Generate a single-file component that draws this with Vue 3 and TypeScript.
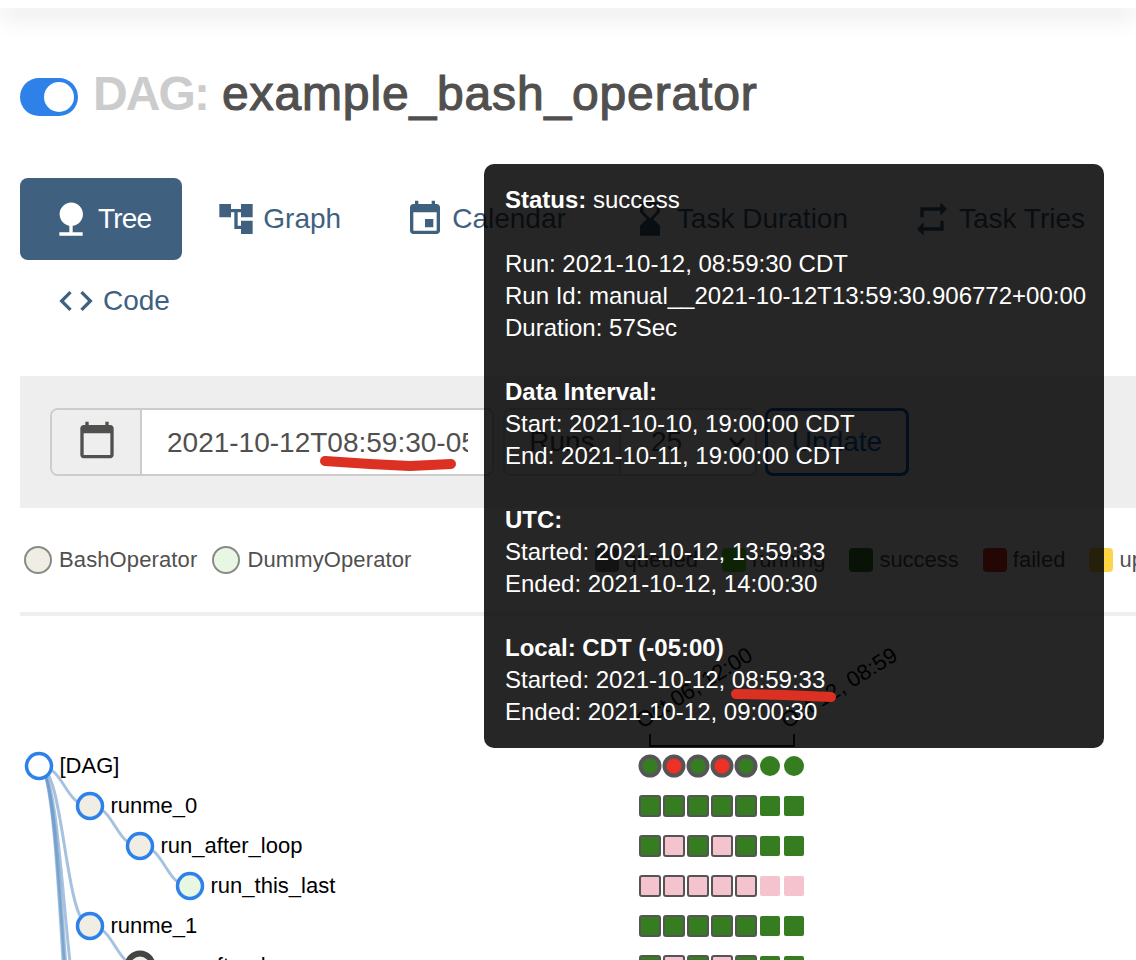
<script setup lang="ts">
interface Tab { label: string; icon: string; active?: boolean }
interface Row { label: string; x: number; y: number; fill: string; ring: string; ringWidth: number; cells: string[] }

const tabs: Tab[] = [
  { label: 'Tree', active: true, icon: 'M13 16.12c3.47-.41 6.17-3.36 6.17-6.95 0-3.87-3.13-7-7-7s-7 3.13-7 7c0 3.47 2.52 6.34 5.83 6.89V20H5v2h14v-2h-6v-3.88z' },
  { label: 'Graph', icon: 'M22 11V3h-7v3H9V3H2v8h7V8h2v10h4v3h7v-8h-7v3h-2V8h2v3z' },
  { label: 'Calendar', icon: 'M17 12h-5v5h5v-5zM16 1v2H8V1H6v2H5c-1.11 0-1.99.9-1.99 2L3 19c0 1.1.89 2 2 2h14c1.1 0 2-.9 2-2V5c0-1.1-.9-2-2-2h-1V1h-2zm3 18H5V8h14v11z' },
  { label: 'Task Duration', icon: 'M18 22l-.01-6L14 12l3.99-4.01L18 2H6v6l4 4-4 3.99V22h12zM8 7.5V4h8v3.5l-4 4-4-4z' },
  { label: 'Task Tries', icon: 'M7 7h10v3l4-4-4-4v3H5v6h2V7zm10 10H7v-3l-4 4 4 4v-3h12v-6h-2v4z' },
  { label: 'Code', icon: 'M9.4 16.6L4.8 12l4.6-4.6L8 6l-6 6 6 6 1.4-1.4zm5.2 0l4.6-4.6-4.6-4.6L16 6l6 6-6 6-1.4-1.4z' }
]

const operators = [
  { label: 'BashOperator', color: '#f0ede4' },
  { label: 'DummyOperator', color: '#e8f7e4' }
]

const states = [
  { label: 'queued', color: '#808080' },
  { label: 'running', color: '#5fe32c' },
  { label: 'success', color: '#367d22' },
  { label: 'failed', color: '#ee3124' },
  { label: 'up_for_retry', color: '#fdd545' }
]

const G = '#367d22'
const P = '#f5c3cd'
const R = '#ee3124'
const BLUE = '#2f81ea'
const BASH = '#f0ede4'

const rows: Row[] = [
  { label: '[DAG]', x: 39, y: 766, fill: '#fff', ring: BLUE, ringWidth: 3.5, cells: [G, R, G, R, G, G, G] },
  { label: 'runme_0', x: 90, y: 806, fill: BASH, ring: BLUE, ringWidth: 3.5, cells: [G, G, G, G, G, G, G] },
  { label: 'run_after_loop', x: 140, y: 846, fill: BASH, ring: BLUE, ringWidth: 3.5, cells: [G, P, G, P, G, G, G] },
  { label: 'run_this_last', x: 190, y: 886, fill: '#e8f7e4', ring: BLUE, ringWidth: 3.5, cells: [P, P, P, P, P, P, P] },
  { label: 'runme_1', x: 90, y: 926, fill: BASH, ring: BLUE, ringWidth: 3.5, cells: [G, G, G, G, G, G, G] },
  { label: 'run_after_loop', x: 140, y: 966, fill: BASH, ring: '#444', ringWidth: 6, cells: [G, P, G, P, G, G, G] }
]

const diagonal = (x0: number, y0: number, x1: number, y1: number) => {
  const mid = (x0 + x1) / 2
  return `M${x0} ${y0}C${mid} ${y0} ${mid} ${y1} ${x1} ${y1}`
}

const links = [
  diagonal(39, 766, 90, 806),
  diagonal(90, 806, 140, 846),
  diagonal(140, 846, 190, 886),
  diagonal(39, 766, 90, 926),
  diagonal(90, 926, 140, 966),
  diagonal(39, 766, 90, 1046),
  diagonal(39, 766, 90, 1126),
  diagonal(39, 766, 90, 1166),
  diagonal(39, 766, 90, 1206)
]

const cellX = (i: number) => 640 + i * 24

const tooltip = [
  [{ b: 'Status:', t: ' success' }],
  [{ t: 'Run: 2021-10-12, 08:59:30 CDT' }, { t: 'Run Id: manual__2021-10-12T13:59:30.906772+00:00' }, { t: 'Duration: 57Sec' }],
  [{ b: 'Data Interval:' }, { t: 'Start: 2021-10-10, 19:00:00 CDT' }, { t: 'End: 2021-10-11, 19:00:00 CDT' }],
  [{ b: 'UTC:' }, { t: 'Started: 2021-10-12, 13:59:33' }, { t: 'Ended: 2021-10-12, 14:00:30' }],
  [{ b: 'Local: CDT (-05:00)' }, { t: 'Started: 2021-10-12, 08:59:33' }, { t: 'Ended: 2021-10-12, 09:00:30' }]
]
</script>

<template>
  <div class="page">
    <div class="navbar"></div>

    <main class="content">
      <h1 class="title">
        <span class="toggle"><span class="knob"></span></span>
        <span class="dag">DAG:</span>
        <span class="name">example_bash_operator</span>
      </h1>

      <nav class="tabs">
        <a v-for="tab in tabs" :key="tab.label" :class="['tab', { active: tab.active }]">
          <svg class="tab-icon" viewBox="0 0 24 24"><path :d="tab.icon" /></svg>
          {{ tab.label }}
        </a>
      </nav>

      <section class="controls">
        <div class="group date">
          <span class="addon">
            <svg class="cal" viewBox="0 0 24 24"><path d="M20 3h-1V1h-2v2H7V1H5v2H4c-1.1 0-2 .9-2 2v16c0 1.1.9 2 2 2h16c1.1 0 2-.9 2-2V5c0-1.1-.9-2-2-2zm0 18H4V8h16v13z" /></svg>
          </span>
          <input class="field" type="text" value="2021-10-12T08:59:30-05:00" readonly />
        </div>
        <div class="group runs">
          <span class="addon">Runs</span>
          <span class="select">
            25
            <svg class="chevron" viewBox="0 0 24 24"><path d="M5 8l7 8 7-8" /></svg>
          </span>
        </div>
        <button class="update" type="button">Update</button>
      </section>

      <section class="legend">
        <div class="legend-group">
          <span v-for="op in operators" :key="op.label" class="legend-item">
            <i class="dot" :style="{ background: op.color }"></i>{{ op.label }}
          </span>
        </div>
        <div class="legend-group states">
          <span v-for="s in states" :key="s.label" class="legend-item">
            <i class="swatch" :style="{ background: s.color }"></i>{{ s.label }}
          </span>
        </div>
      </section>
    </main>

    <svg class="chart" width="1116" height="344" viewBox="20 616 1116 344">
      <text class="axis-label" transform="translate(642 729) rotate(-32)">Oct 06, 12:00</text>
      <text class="axis-label" transform="translate(787 729) rotate(-32)">Oct 12, 08:59</text>
      <path d="M650 734V746H794V734" fill="none" stroke="#222" stroke-width="2" />

      <path v-for="(d, i) in links" :key="i" :d="d" class="link" />

      <g v-for="row in rows" :key="row.y">
        <circle :cx="row.x" :cy="row.y" r="12.5" :fill="row.fill" :stroke="row.ring" :stroke-width="row.ringWidth" />
        <text class="node-label" :x="row.x + 20.5" :y="row.y + 7">{{ row.label }}</text>
        <template v-for="(color, i) in row.cells" :key="i">
          <circle v-if="row.label === '[DAG]'" :cx="cellX(i) + 10" :cy="row.y" :r="i < 5 ? 9.5 : 10" :fill="color" :stroke="i < 5 ? '#555' : 'none'" :stroke-width="i < 5 ? 4 : 0" />
          <rect v-else :x="cellX(i)" :y="row.y - 10" width="20" height="20" rx="2" :fill="color" :stroke="i < 5 ? '#555' : 'none'" :stroke-width="i < 5 ? 2 : 0" />
        </template>
      </g>
    </svg>

    <aside class="tooltip">
      <p v-for="(block, i) in tooltip" :key="i">
        <span v-for="(line, j) in block" :key="j" class="line"><b v-if="line.b">{{ line.b }}</b>{{ line.t }}</span>
      </p>
    </aside>

    <svg class="marks" width="1136" height="960" viewBox="0 0 1136 960">
      <path d="M325 461L370 464L410 466L451 464" />
      <path d="M736 694L785 695L831 697" />
    </svg>
  </div>
</template>

<style>
html,
body {
  margin: 0;
  background: #fff;
}
</style>

<style scoped>
.page {
  position: relative;
  width: 1136px;
  height: 960px;
  overflow: hidden;
  background: #fff;
  font-family: "Liberation Sans", Arial, sans-serif;
  color: #51504f;
}

.navbar {
  height: 8px;
  background: #fff;
  box-shadow: 0 6px 24px rgba(0, 0, 0, 0.18);
}

.content {
  margin-left: 20px;
}

.title {
  display: flex;
  align-items: center;
  height: 58px;
  margin: 60px 0 0;
  font-size: 48px;
  line-height: 58px;
  white-space: nowrap;
}

.toggle {
  display: flex;
  align-items: center;
  justify-content: flex-end;
  box-sizing: border-box;
  width: 58px;
  height: 38px;
  padding-right: 4px;
  margin-right: 15px;
  border-radius: 19px;
  background: #2f81ea;
}

.knob {
  width: 30px;
  height: 30px;
  border-radius: 50%;
  background: #fff;
}

.dag {
  color: #ccc;
  font-weight: bold;
  letter-spacing: -1.9px;
  margin: 0 14px 6px 0;
}

.name {
  margin-bottom: 6px;
  font-weight: normal;
  letter-spacing: 0.85px;
  -webkit-text-stroke: 1.2px #51504f;
}

.tabs {
  display: flex;
  flex-wrap: wrap;
  column-gap: 4px;
  margin-top: 52px;
}

.tab {
  display: flex;
  align-items: center;
  gap: 7px;
  height: 82px;
  padding: 0 30px;
  border-radius: 8px;
  font-size: 28px;
  color: #406080;
  white-space: nowrap;
}

.tab.active {
  padding: 0 31px;
  background: #406080;
  color: #fff;
  letter-spacing: -0.8px;
}

.tab:last-child {
  margin-left: 6px;
}

.tab-icon {
  width: 40px;
  height: 40px;
  fill: currentColor;
}

.controls {
  display: flex;
  gap: 8px;
  height: 68px;
  padding: 32px 30px;
  margin-top: 34px;
  background: #eee;
  white-space: nowrap;
}

.group {
  display: flex;
  box-sizing: border-box;
  height: 68px;
  border: 2px solid #ccc;
  border-radius: 8px;
  overflow: hidden;
  background: #fff;
  font-size: 28px;
}

.date {
  width: 444px;
}

.runs {
  width: 254px;
  margin-left: 1px;
}

.addon {
  display: flex;
  align-items: center;
  justify-content: center;
  box-sizing: border-box;
  background: #eee;
  border-right: 2px solid #ccc;
}

.date .addon {
  width: 90px;
}

.runs .addon {
  width: 116px;
}

.cal {
  width: 40px;
  height: 40px;
  margin: 0 0 4px 1px;
  fill: #51504f;
}

.field {
  flex: 1;
  min-width: 0;
  padding: 2px 24px 0 25px;
  border: 0;
  outline: 0;
  font: inherit;
  color: #51504f;
  background: #fff;
}

.select {
  display: flex;
  flex: 1;
  align-items: center;
  justify-content: space-between;
  padding: 0 6px 0 30px;
}

.chevron {
  width: 24px;
  height: 24px;
  fill: none;
  stroke: #51504f;
  stroke-width: 3;
}

.update {
  width: 144px;
  height: 68px;
  padding: 0;
  border: 3px solid #0f62b8;
  border-radius: 8px;
  background: transparent;
  font: inherit;
  font-size: 28px;
  color: #0f62b8;
}

.legend {
  display: flex;
  align-items: center;
  gap: 183px;
  box-sizing: border-box;
  height: 108px;
  padding-left: 4px;
  border-bottom: 4px solid #eee;
  font-size: 22px;
  white-space: nowrap;
}

.legend-group {
  display: flex;
  gap: 15px;
  letter-spacing: 0.12px;
}

.states {
  gap: 24px;
  letter-spacing: 0;
}

.legend-item {
  display: flex;
  align-items: center;
  gap: 7px;
}

.states .legend-item {
  gap: 6px;
}

.dot {
  box-sizing: border-box;
  width: 28px;
  height: 28px;
  border: 2px solid #8a8a86;
  border-radius: 50%;
}

.swatch {
  width: 24px;
  height: 24px;
  border-radius: 4px;
}

.chart {
  display: block;
  margin-left: 20px;
}

.axis-label {
  font-size: 22px;
  fill: #000;
}

.link {
  fill: none;
  stroke: #6b9ac8;
  stroke-width: 3;
  stroke-opacity: 0.6;
}

.node-label {
  font-size: 22px;
  fill: #000;
}

.tooltip {
  position: absolute;
  left: 484px;
  top: 164px;
  box-sizing: border-box;
  width: 620px;
  height: 584px;
  padding: 20px 21px;
  border-radius: 10px;
  background: rgba(0, 0, 0, 0.85);
  color: #fff;
  font-size: 24px;
  line-height: 32px;
  white-space: nowrap;
}

.tooltip p {
  margin: 0 0 32px;
}

.line {
  display: block;
}

.marks {
  position: absolute;
  left: 0;
  top: 0;
  pointer-events: none;
}

.marks path {
  fill: none;
  stroke: #dc3023;
  stroke-width: 10;
  stroke-linecap: round;
  stroke-linejoin: round;
}
</style>
